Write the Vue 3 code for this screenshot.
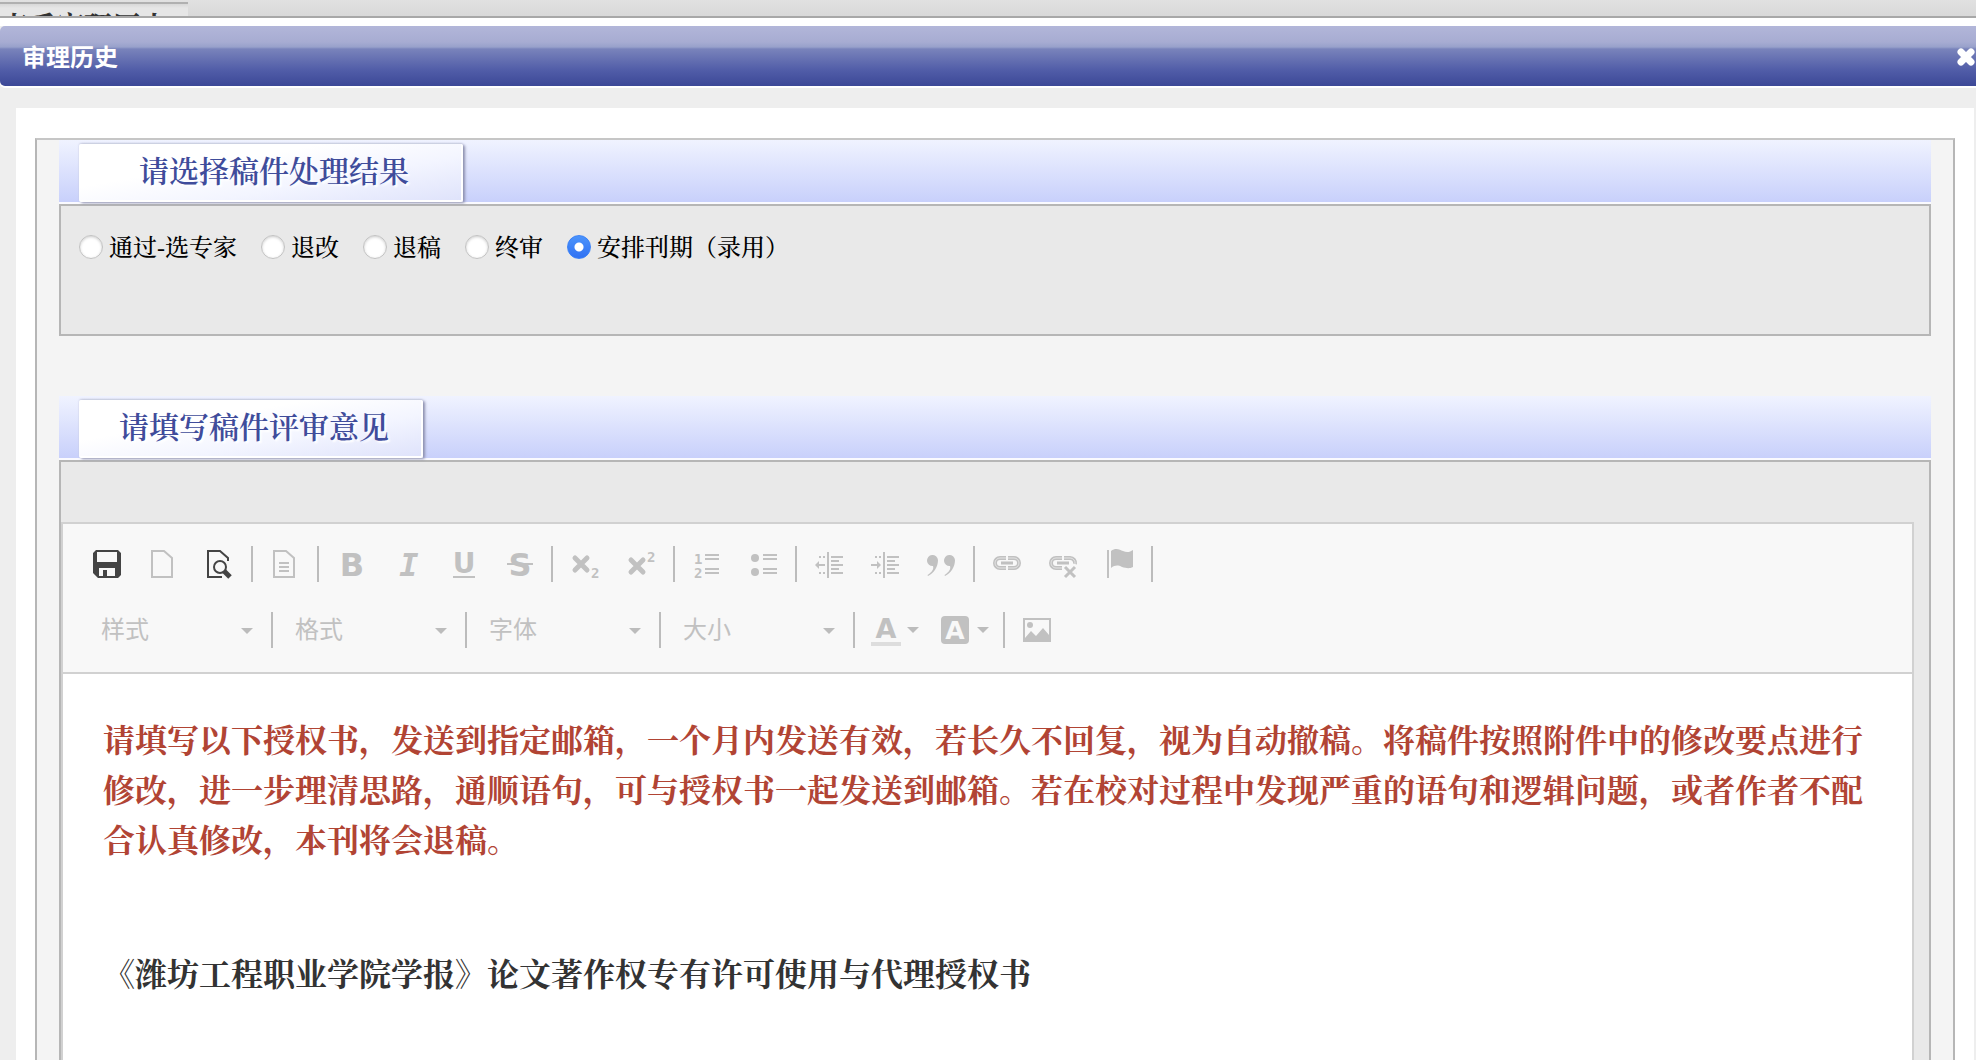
<script setup>
import { ref } from "vue";

const result = ref("publish");

const results = [
  { value: "expert", label: "通过-选专家" },
  { value: "revise", label: "退改" },
  { value: "reject", label: "退稿" },
  { value: "final", label: "终审" },
  { value: "publish", label: "安排刊期（录用）" },
];

const page = '<path d="M5 3H17L25 10V29H5Z" fill="none" stroke="currentColor" stroke-width="2"/>';
const letter = 'font-family="DejaVu Sans, sans-serif" font-weight="700" fill="currentColor" text-anchor="middle"';
const digit = 'font-family="DejaVu Sans Mono, monospace" font-weight="700" font-size="14" fill="currentColor"';
const indentLines =
  '<path d="M15 4V30M18 9H30M18 13H26M18 17H30M18 21H26M18 25H30M6 9H8M10 9H12M6 25H8M10 25H12" fill="none" stroke="currentColor" stroke-width="2"/>';
const leftLoop = "M15 10H9A5 5 0 0 0 9 20H15";

const toolGroups = [
  [
    {
      name: "保存",
      on: true,
      svg: '<path fill="currentColor" fill-rule="evenodd" d="M5 2H27L30 5V27L27 30H7L2 25V5ZM6 4V14H26V4ZM8 20V28H12V22H16V28H24V20Z"/>',
    },
    { name: "新建", svg: page },
    {
      name: "预览",
      on: true,
      svg: '<g fill="none" stroke="currentColor" stroke-width="2"><path d="M25 13V10L17 3H5V29H19"/><circle cx="17" cy="19" r="6"/><path d="M21 23L27 29" stroke-width="5"/></g>',
    },
  ],
  [
    {
      name: "模板",
      svg: page + '<path d="M10 15H20M10 19H20M10 23H20" stroke="currentColor" stroke-width="2"/>',
    },
  ],
  [
    { name: "加粗", svg: `<text x="17" y="28" font-size="32" ${letter}>B</text>` },
    {
      name: "倾斜",
      svg: '<text x="18" y="28" font-size="32" font-family="DejaVu Sans Mono, monospace" font-weight="700" font-style="italic" fill="currentColor" text-anchor="middle">I</text>',
    },
    {
      name: "下划线",
      svg: `<text x="17" y="25" font-size="28" ${letter}>U</text><path d="M6 29H28" stroke="currentColor" stroke-width="2"/>`,
    },
    {
      name: "删除线",
      svg: `<text x="17" y="28" font-size="32" ${letter}>S</text><path d="M4 16H30" stroke="currentColor" stroke-width="2"/>`,
    },
  ],
  [
    {
      name: "下标",
      svg: `<path d="M6 10L18 22M18 10L6 22" stroke="currentColor" stroke-width="5" stroke-linecap="round"/><text x="22" y="30" ${digit}>2</text>`,
    },
    {
      name: "上标",
      svg: `<path d="M6 12L18 24M18 12L6 24" stroke="currentColor" stroke-width="5" stroke-linecap="round"/><text x="22" y="14" ${digit}>2</text>`,
    },
  ],
  [
    {
      name: "编号列表",
      svg: `<text x="3" y="16" ${digit}>1</text><text x="3" y="30" ${digit}>2</text><path d="M14 7H28M14 11H28M14 21H28M14 25H28" stroke="currentColor" stroke-width="2"/>`,
    },
    {
      name: "项目列表",
      svg: '<circle cx="8" cy="10" r="4" fill="currentColor"/><circle cx="8" cy="24" r="4" fill="currentColor"/><path d="M16 7H30M16 11H30M16 21H30M16 25H30" stroke="currentColor" stroke-width="2"/>',
    },
  ],
  [
    {
      name: "减少缩进量",
      svg: indentLines + '<path d="M2 17L6 13V16H12V18H6V21Z" fill="currentColor"/>',
    },
    {
      name: "增加缩进量",
      svg: indentLines + '<path d="M12 17L8 13V16H2V18H8V21Z" fill="currentColor"/>',
    },
    {
      name: "块引用",
      svg: '<path fill="currentColor" d="M2 13A5.500 5.500 0 0 1 13 12C13 19 9 25 3 28L2.500 27C7 24 9 21 8 18A5.500 5.500 0 0 1 2 13ZM19 13A5.500 5.500 0 0 1 30 12C30 19 26 25 20 28L19.500 27C24 24 26 21 25 18A5.500 5.500 0 0 1 19 13Z"/>',
    },
  ],
  [
    {
      name: "插入超链接",
      svg: `<g fill="none" stroke="currentColor" stroke-width="4"><path d="${leftLoop}"/><path d="M17 10H23A5 5 0 0 1 23 20H17"/><path d="M10 15H22" stroke-width="3"/></g><g fill="none" stroke="#e4e4e4"><path d="${leftLoop}"/><path d="M17 10H23A5 5 0 0 1 23 20H17"/></g>`,
    },
    {
      name: "取消超链接",
      svg: `<g fill="none" stroke="currentColor" stroke-width="4"><path d="${leftLoop}"/><path d="M17 10H23A5 5 0 0 1 28 16"/><path d="M10 15H22" stroke-width="3"/></g><g fill="none" stroke="#e4e4e4"><path d="${leftLoop}"/><path d="M17 10H23A5 5 0 0 1 28 16"/></g><path d="M18 19L28 29M28 19L18 29" stroke="#f8f8f8" stroke-width="6"/><path d="M18 19L28 29M28 19L18 29" stroke="currentColor" stroke-width="3"/>`,
    },
    {
      name: "锚点链接",
      svg: '<path d="M5 2V30" stroke="currentColor" stroke-width="2"/><path d="M8 3C13 -1 17 2 20 3C24 5 27 4 30 2V19C26 21 23 20 19 19C15 17 12 17 8 20Z" fill="currentColor"/>',
    },
  ],
];

const combos = ["样式", "格式", "字体", "大小"];

const colorTools = [
  {
    name: "文本颜色",
    svg: `<text x="15" y="24" font-size="27" ${letter}>A</text><path d="M0 30H30" stroke="#dddddd" stroke-width="4"/>`,
  },
  {
    name: "背景颜色",
    svg: '<rect y="2" width="28" height="28" rx="4" fill="currentColor"/><text x="14" y="25" font-size="25" font-family="DejaVu Sans, sans-serif" font-weight="700" fill="#f8f8f8" text-anchor="middle">A</text>',
  },
];
</script>

<template>
  <div class="page">
    <div class="tab-strip">
      <div class="tab">查看审理历史</div>
    </div>

    <div class="dialog">
      <header class="title-bar">
        <h1>审理历史</h1>
        <button class="close" type="button" aria-label="关闭">
          <svg width="20" height="20" viewBox="0 0 20 20">
            <path d="M5 6L15 16M15 6L5 16" stroke="#fff" stroke-width="7" stroke-linecap="round" />
          </svg>
        </button>
      </header>

      <main class="sheet">
        <div class="panel">
          <section>
            <div class="band">
              <h2 class="band-title wide">请选择稿件处理结果</h2>
            </div>
            <div class="box choices">
              <label v-for="item in results" :key="item.value">
                <input type="radio" name="result" :value="item.value" v-model="result" />
                <span>{{ item.label }}</span>
              </label>
            </div>
          </section>

          <section>
            <div class="band">
              <h2 class="band-title">请填写稿件评审意见</h2>
            </div>
            <div class="box opinion">
              <div class="editor">
                <div class="toolbar">
                  <div class="tool-row">
                    <div v-for="(group, i) in toolGroups" :key="i" class="group">
                      <button
                        v-for="tool in group"
                        :key="tool.name"
                        type="button"
                        class="tool"
                        :class="{ on: tool.on }"
                        :aria-label="tool.name"
                      >
                        <svg width="32" height="32" viewBox="0 0 32 32" v-html="tool.svg"></svg>
                      </button>
                      <span class="sep"></span>
                    </div>
                  </div>

                  <div class="tool-row">
                    <div v-for="name in combos" :key="name" class="combo-group">
                      <div class="combo">
                        <select :aria-label="name">
                          <option>{{ name }}</option>
                        </select>
                        <span class="arrow"></span>
                      </div>
                      <span class="line"></span>
                    </div>
                    <div class="colors">
                      <button
                        v-for="tool in colorTools"
                        :key="tool.name"
                        type="button"
                        class="color-tool"
                        :aria-label="tool.name"
                      >
                        <svg width="32" height="32" viewBox="0 0 32 32" v-html="tool.svg"></svg>
                        <span class="arrow"></span>
                      </button>
                    </div>
                    <span class="sep"></span>
                    <button type="button" class="tool" aria-label="图像">
                      <svg width="32" height="32" viewBox="0 0 32 32">
                        <rect x="3" y="5" width="26" height="22" fill="none" stroke="currentColor" stroke-width="2" />
                        <circle cx="9" cy="11" r="3" fill="currentColor" />
                        <path d="M4 26V24L10 17L15 22L22 14L28 21V26Z" fill="currentColor" />
                      </svg>
                    </button>
                  </div>
                </div>

                <div class="content" contenteditable="true" spellcheck="false" role="textbox" aria-label="评审意见">
                  <p class="notice">请填写以下授权书，发送到指定邮箱，一个月内发送有效，若长久不回复，视为自动撤稿。将稿件按照附件中的修改要点进行修改，进一步理清思路，通顺语句，可与授权书一起发送到邮箱。若在校对过程中发现严重的语句和逻辑问题，或者作者不配合认真修改，本刊将会退稿。</p>
                  <p>《潍坊工程职业学院学报》论文著作权专有许可使用与代理授权书</p>
                </div>
              </div>
            </div>
          </section>
        </div>
      </main>
    </div>
  </div>
</template>

<style>
body {
  margin: 0;
  overflow: hidden;
}
</style>

<style scoped>
* {
  box-sizing: border-box;
}

.page {
  height: 100vh;
  overflow: hidden;
  background: #fff;
  color: #000;
  font-family: "Liberation Serif", "Noto Serif CJK SC", "Noto Sans CJK SC", serif;
  font-size: 24px;
}

h1,
h2,
p {
  margin: 0;
}

button {
  padding: 0;
  border: 0;
  background: none;
}

svg {
  display: block;
  overflow: visible;
}

.tab-strip {
  height: 18px;
  overflow: hidden;
  border-bottom: 2px solid #a8a8a8;
  background: linear-gradient(#e1e1e1, #d9d9d9);
}

.tab {
  width: 188px;
  margin-top: 2px;
  padding-top: 8px;
  border-top: 2px solid #b0b0b0;
  background: linear-gradient(#d8d8d8, #e6e6e6 4px);
  color: #333;
  font-size: 28px;
  font-weight: 700;
  line-height: 32px;
  white-space: nowrap;
}

.dialog {
  margin-top: 8px;
  background: #eee;
}

.title-bar {
  display: flex;
  align-items: center;
  justify-content: space-between;
  height: 60px;
  padding-left: 22px;
  border-radius: 5px 0 0 5px;
  background: linear-gradient(#b2b6d9 0, #a7acd2 16px, #98a1cb 21px, #7983bb 23px, #515da8 44px, #3c4897 60px);
  box-shadow: 0 2px #fff;
}

.title-bar h1 {
  color: #fff;
  font-family: "Noto Sans CJK SC", sans-serif;
  font-size: 24px;
  line-height: 32px;
}

.sheet {
  margin: 22px 2px 0 16px;
  padding: 30px 19px 0;
  background: #fff;
}

.panel {
  padding: 0 22px;
  border: 2px solid #b6b6b6;
  border-top-color: #c6c6c6;
  background: #f4f4f4;
}

.band {
  display: flex;
  align-items: flex-end;
  height: 64px;
  padding-left: 20px;
  border-bottom: 2px solid #fafaff;
  background: linear-gradient(#f0f3ff, #c8d0fb);
}

.band-title {
  height: 58px;
  padding: 0 32px 0 40px;
  border: 2px solid #fff;
  border-width: 0 2px 2px 0;
  border-radius: 2px;
  background: linear-gradient(170deg, #fff 35%, #f3f5ff 65%, #dfe3fb);
  box-shadow: 2px 1px 3px #8c8fae, 0 -1px 2px #cfd2e4;
  color: #3f4c9b;
  font-size: 30px;
  font-weight: 600;
  line-height: 56px;
  text-shadow: 2px 2px 2px #fff;
}

.band-title.wide {
  padding: 0 52px 0 60px;
}

.box {
  border: 2px solid #b6b6b6;
  background: #e9e9e9;
}

.choices {
  display: flex;
  flex-wrap: wrap;
  align-items: flex-start;
  gap: 0 24px;
  min-height: 132px;
  margin-bottom: 60px;
  padding: 23px 18px;
}

.choices label {
  display: flex;
  align-items: center;
  gap: 6px;
  height: 36px;
  font-weight: 500;
  line-height: 36px;
}

.choices span {
  padding-top: 2px;
}

.choices input {
  appearance: none;
  width: 24px;
  height: 24px;
  margin: 0;
  border: 1px solid #c2c2c2;
  border-radius: 50%;
  background: #fff;
  box-shadow: inset 0 1px 3px #ccc;
}

.choices input:checked {
  border-color: #3b82f7;
  background: radial-gradient(circle, #fff 4px, transparent 5px), linear-gradient(#4b93fb, #2f71f3);
  box-shadow: none;
}

.opinion {
  padding: 60px 15px 0 0;
}

.editor {
  border: 2px solid #d1d1d1;
}

.toolbar {
  display: flex;
  flex-direction: column;
  gap: 10px;
  padding: 12px 16px 14px;
  border-bottom: 2px solid #d1d1d1;
  background: #f8f8f8;
}

.tool-row,
.group,
.combo-group,
.colors {
  display: flex;
  align-items: center;
}

.tool-row {
  min-height: 56px;
}

.tool,
.color-tool {
  color: #c1c1c1;
}

.tool {
  padding: 12px;
}

.tool.on {
  color: #444;
}

.sep,
.line {
  width: 2px;
  height: 36px;
  background: #bcbcbc;
}

.sep {
  margin: 0 4px;
}

.combo {
  position: relative;
  width: 192px;
}

.combo select {
  appearance: none;
  display: block;
  width: 100%;
  height: 40px;
  padding: 0 40px 6px 22px;
  border: 0;
  background: none;
  color: #c1c1c1;
  font-family: "Noto Sans CJK SC", sans-serif;
  font-size: 24px;
}

.arrow {
  border: 6px solid transparent;
  border-top-color: #bcbcbc;
  border-bottom: 0;
}

.combo .arrow {
  position: absolute;
  top: 18px;
  right: 18px;
  pointer-events: none;
}

.colors {
  padding-right: 4px;
}

.color-tool {
  display: flex;
  align-items: center;
  gap: 4px;
  padding: 0 6px 0 16px;
}

.content {
  min-height: 600px;
  padding: 42px 40px;
  outline: none;
  background: #fff;
  color: #333;
  font-size: 32px;
  font-weight: 700;
  line-height: 50px;
}

.notice {
  margin-bottom: 84px;
  color: #b14434;
}
</style>
